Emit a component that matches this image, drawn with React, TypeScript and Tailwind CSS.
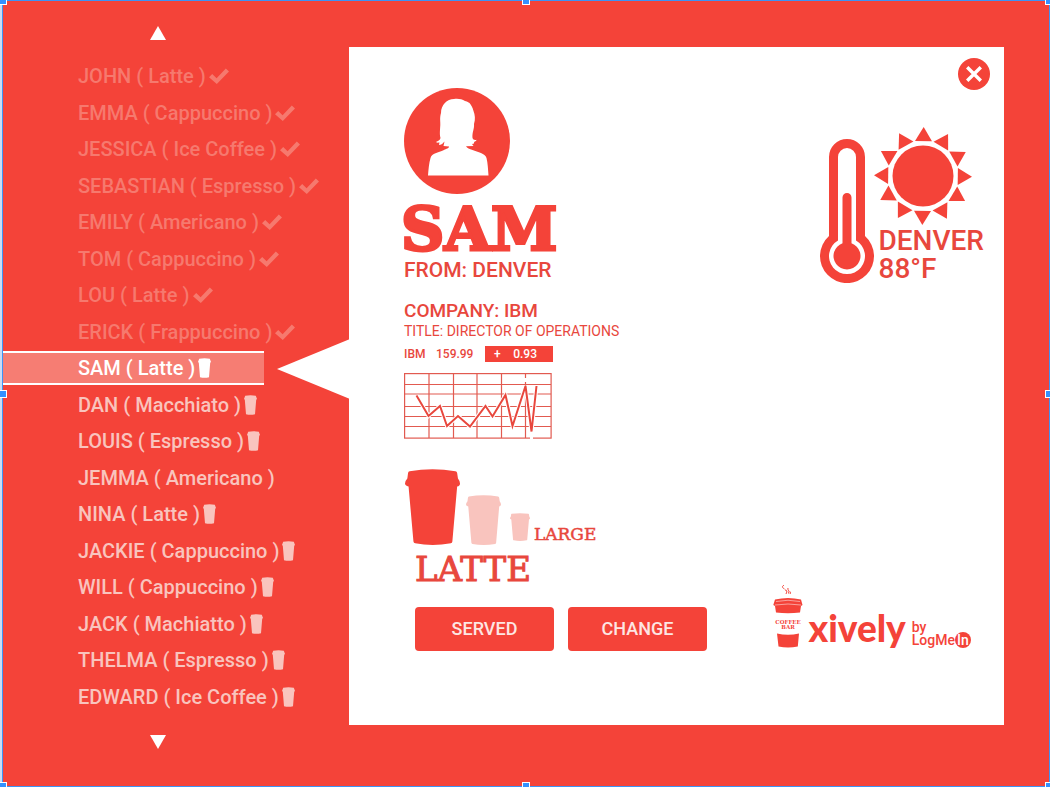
import React from "react";

type Status = "served" | "active" | "waiting" | "none";
type Order = { name: string; drink: string; status: Status };

const orders: Order[] = [
  { name: "JOHN", drink: "Latte", status: "served" },
  { name: "EMMA", drink: "Cappuccino", status: "served" },
  { name: "JESSICA", drink: "Ice Coffee", status: "served" },
  { name: "SEBASTIAN", drink: "Espresso", status: "served" },
  { name: "EMILY", drink: "Americano", status: "served" },
  { name: "TOM", drink: "Cappuccino", status: "served" },
  { name: "LOU", drink: "Latte", status: "served" },
  { name: "ERICK", drink: "Frappuccino", status: "served" },
  { name: "SAM", drink: "Latte", status: "active" },
  { name: "DAN", drink: "Macchiato", status: "waiting" },
  { name: "LOUIS", drink: "Espresso", status: "waiting" },
  { name: "JEMMA", drink: "Americano", status: "none" },
  { name: "NINA", drink: "Latte", status: "waiting" },
  { name: "JACKIE", drink: "Cappuccino", status: "waiting" },
  { name: "WILL", drink: "Cappuccino", status: "waiting" },
  { name: "JACK", drink: "Machiatto", status: "waiting" },
  { name: "THELMA", drink: "Espresso", status: "waiting" },
  { name: "EDWARD", drink: "Ice Coffee", status: "waiting" },
];

const rowStyle: Record<Status, string> = {
  served: "w-full text-[#f6796e]",
  active: "h-[34px] w-[264px] border-y-2 border-white bg-[#f67d73] text-white",
  waiting: "w-full text-[#f9c4be]",
  none: "w-full text-[#f9c4be]",
};

function CheckIcon() {
  return (
    <svg viewBox="0 0 20 16" className="ml-[3px] h-4 w-5 shrink-0" fill="currentColor" aria-hidden="true">
      <path d="M0 9.2 3.2 6l4.4 4.2L16.8.6 20 3.4 7.8 16Z" />
    </svg>
  );
}

function TumblerIcon() {
  return (
    <svg viewBox="0 0 13 20" className="ml-[3px] h-5 w-[13px] shrink-0" fill="currentColor" aria-hidden="true">
      <path d="M1.2.8Q6.5-.4 11.8.8L13 4l-.8.8L11 19.3Q6.5 20.4 2 19.3L.8 4.8 0 4Z" />
    </svg>
  );
}

function CupIcon({ className }: { className: string }) {
  return (
    <svg viewBox="0 0 54 76" className={className} fill="currentColor" preserveAspectRatio="none" aria-hidden="true">
      <path d="M4.5 2.2Q27-1.5 49.5 2.2Q51 2.5 51.2 4L52 9.5Q54 12 54 14.5Q54 17 51.2 17.5L46.5 72.5Q46.3 74 45 74.3Q27 77.5 10 74.3Q8.5 74 8.3 72.5L3.5 17.5Q0 16.5 0 14.5Q0 12 2.3 9.5L3 4Q3.2 2.5 4.5 2.2Z" />
    </svg>
  );
}

function Avatar() {
  return (
    <svg viewBox="0 0 106 106" className="block size-[106px]" role="img" aria-label="Sam">
      <circle cx="53" cy="53" r="53" fill="#f44339" />
      <path
        fill="#fff"
        d="M50 11C43 11 37 17 37 25C35.5 30 36.5 33 36.3 37C36 43 35.5 46 36.5 50C36 52.5 34 53 32 54C33 55 34.5 54.5 35.5 54.5L35 57C37 57 38.5 56 39.5 54.5L40.5 53.5L39.5 58L45 58.5C45.5 60 42 61 40 62C34 65 28 65 26.5 70C25 75 24.5 81 24 87.5H84.5C84 81 83.8 75 82.5 70C81 65 74 64.5 68.5 62C65.5 61 63 60 62 58.2L69.5 58L68 56C70 56 70.5 55 70 54C71.5 53.5 72.5 53 72.5 51.8C70.5 52.5 69 51.5 68.5 50C68 44 70.5 41 70 36C71.5 31 71 27 69.5 23C68.5 19 67 17 65.5 15C64 14.5 64 13.5 61 13C58 11 54 10.5 50 11Z"
      />
    </svg>
  );
}

function StockChart() {
  const points =
    "12.5,22.5 24.5,43 36,33 43,53 54,43 66,53.5 81.5,33 88.5,43.5 101.5,22 108.5,53 121.5,13 127.5,58.5 132.5,13";
  return (
    <svg viewBox="0 0 148 66" className="block h-[66px] w-[148px]" fill="none" role="img" aria-label="IBM stock chart">
      <g stroke="#e25a50" strokeWidth="1.2">
        <rect x="0.6" y="0.6" width="146.5" height="64.5" />
        <path d="M25 .5V65M49.5.5V65M73 .5V65M97.5.5V65M121.5.5V65M.5 11.5H147M.5 21H147M.5 33.5H147M.5 43.5H147M.5 53.5H147" />
      </g>
      <path d="M121.5 5V9M127.5 60V66" stroke="#fff" strokeWidth="3" />
      <polyline points={points} stroke="#fff" strokeWidth="4" />
      <polyline points={points} stroke="#e8473d" strokeWidth="2" />
    </svg>
  );
}

function Thermometer() {
  return (
    <svg viewBox="0 0 54 144" className="mt-3 block h-36 w-[54px]" aria-hidden="true">
      <path fill="#f44339" d="M9 18a18 18 0 0 1 36 0V97a27 27 0 1 1-36 0Z" />
      <path fill="#fff" d="M18 18a9 9 0 0 1 18 0V101.5a18 18 0 1 1-18 0Z" />
      <path fill="#f44339" d="M22.5 58.5a4.5 4.5 0 0 1 9 0V104.3a13.5 13.5 0 1 1-9 0Z" />
    </svg>
  );
}

function Sun() {
  const rays = Array.from({ length: 12 }, (_, i) => i * 30 + 0.8);
  return (
    <svg viewBox="0 0 98 98" className="block size-[98px]" fill="#f44339" aria-hidden="true">
      <circle cx="49" cy="49" r="30.5" />
      {rays.map((angle) => (
        <path key={angle} d="M49 0 57.5 14.2H40.5Z" transform={`rotate(${angle} 49 49)`} />
      ))}
    </svg>
  );
}

function CoffeeBarLogo() {
  return (
    <svg viewBox="0 0 30 63" className="block h-[63px] w-[30px] shrink-0" fill="#f44339" aria-hidden="true">
      <path
        d="M11 0C8 2 10 3 11.5 4M12 5C14 5 14.5 6 13 9M15 3C14 5 17 5 15.5 8.5M17 6.5Q18 8 17 9"
        fill="none"
        stroke="#f44339"
        strokeWidth="1"
      />
      <path d="M2 14.5Q15 11.5 28 14.5L29.5 20 28 21 27 27.5Q15 29 3 27.5L2 21 .3 20Z" />
      <path d="M3 16.5Q15 14 27 16.5M2 20Q15 18 28 20" fill="none" stroke="#fff" strokeWidth=".5" />
      <text x="15" y="38.5" textAnchor="middle" fontFamily="DejaVu Serif" fontWeight="700" fontSize="5.5">
        COFFEE
      </text>
      <text x="15" y="43.5" textAnchor="middle" fontFamily="DejaVu Serif" fontWeight="700" fontSize="5.5">
        BAR
      </text>
      <path d="M4 48.5Q15 51 26 48.5L24.8 61.5Q15 63.5 5.5 61.5Z" />
    </svg>
  );
}

function SelectionFrame() {
  const handle = "absolute size-2 border border-white bg-[#3391ff]";
  return (
    <div className="pointer-events-none absolute inset-0 border-l-2 border-[#c9dcf5]" aria-hidden="true">
      <div className="absolute inset-0 border border-[#3d93f5]" />
      <span className={`${handle} -left-[3px] -top-[3px]`} />
      <span className={`${handle} -top-[3px] left-1/2 -translate-x-1/2`} />
      <span className={`${handle} -right-[3px] -top-[3px]`} />
      <span className={`${handle} -left-[3px] top-1/2 -translate-y-1/2`} />
      <span className={`${handle} -right-[3px] top-1/2 -translate-y-1/2`} />
      <span className={`${handle} -bottom-[3px] -left-[3px]`} />
      <span className={`${handle} -bottom-[3px] left-1/2 -translate-x-1/2`} />
      <span className={`${handle} -bottom-[3px] -right-[3px]`} />
    </div>
  );
}

export default function App() {
  return (
    <div className="relative flex min-h-screen overflow-hidden bg-[#f44339] font-['Roboto',sans-serif] text-[#e8473d]">
      <aside className="flex w-[349px] shrink-0 flex-col">
        <div className="flex h-[58px] pl-[150px] pt-[26px]">
          <button type="button" aria-label="Scroll up" className="h-[14px] w-4">
            <svg viewBox="0 0 16 14" className="block" fill="#fff">
              <path d="M8 0 16 14H0Z" />
            </svg>
          </button>
        </div>
        <ul className="flex flex-1 flex-col">
          {orders.map((order) => (
            <li key={order.name} className="flex flex-1 items-center">
              <button
                type="button"
                className={`flex items-center whitespace-nowrap pl-[78px] text-xl font-medium leading-6 ${rowStyle[order.status]}`}
              >
                {order.name} ( {order.drink} )
                {order.status === "served" && <CheckIcon />}
                {(order.status === "active" || order.status === "waiting") && <TumblerIcon />}
              </button>
            </li>
          ))}
        </ul>
        <div className="flex h-[72px] pl-[150px] pt-[20px]">
          <button type="button" aria-label="Scroll down" className="h-[14px] w-4">
            <svg viewBox="0 0 16 14" className="block" fill="#fff">
              <path d="M8 14 0 0H16Z" />
            </svg>
          </button>
        </div>
      </aside>

      <main className="relative mb-[62px] mr-[46px] mt-[47px] flex flex-1 flex-col bg-white pb-[73px] pl-[55px] pr-5 pt-[41px]">
        <svg viewBox="0 0 73 60" className="absolute -left-[72px] top-[292px] h-[60px] w-[73px]" fill="#fff" aria-hidden="true">
          <path d="M0 30 73 0V60Z" />
        </svg>
        <button
          type="button"
          aria-label="Close"
          className="absolute right-[14px] top-[11px] flex size-8 items-center justify-center rounded-full bg-[#f44339]"
        >
          <svg viewBox="0 0 16 16" className="size-4" stroke="#fff" strokeWidth="3.4" aria-hidden="true">
            <path d="M1.2 1.2 14.8 14.8M14.8 1.2 1.2 14.8" />
          </svg>
        </button>

        <div className="flex justify-between">
          <section>
            <Avatar />
            <h1 className="-ml-[3px] mt-1 font-['DejaVu_Serif',serif] text-[60px] font-bold leading-[62px] text-[#f44339] [-webkit-text-stroke:3px_#f44339]">
              SAM
            </h1>
            <p className="text-[21px] font-medium leading-5">FROM: DENVER</p>
            <p className="mt-[22px] text-[19px] font-medium leading-[18px]">COMPANY: IBM</p>
            <p className="text-sm leading-[22px]">TITLE: DIRECTOR OF OPERATIONS</p>
            <div className="mt-1 flex items-center text-xs font-medium leading-4">
              <span className="w-8">IBM</span>
              <span className="w-[49px]">159.99</span>
              <span className="flex w-[68px] justify-between bg-[#f44339] pl-[9px] pr-4 text-white">
                <span>+</span>
                <span>0.93</span>
              </span>
            </div>
            <div className="mt-[11px]">
              <StockChart />
            </div>
          </section>

          <section className="mt-[39px] flex items-start">
            <Thermometer />
            <div>
              <Sun />
              <p className="ml-[5px] mt-[2px] text-[28px] font-medium leading-7">
                DENVER
                <br />
                88°F
              </p>
            </div>
          </section>
        </div>

        <div className="mt-[30px] flex items-end">
          <CupIcon className="ml-[1px] h-[76px] w-[55px] text-[#f44339]" />
          <CupIcon className="ml-[6px] h-[50px] w-[35px] text-[#f9c4be]" />
          <CupIcon className="mb-1 ml-[9px] h-7 w-5 text-[#f9c4be]" />
          <span className="ml-1 font-['DejaVu_Serif',serif] text-[17px] leading-[22px] [-webkit-text-stroke:0.5px_#e8473d]">LARGE</span>
        </div>

        <div className="flex items-end justify-between pr-[13px]">
          <section className="pl-[11px]">
            <h2 className="mt-[6px] font-['DejaVu_Serif',serif] text-[34px] leading-9 [-webkit-text-stroke:1px_#e8473d]">LATTE</h2>
            <div className="mt-5 flex gap-[14px]">
              <button type="button" className="h-11 w-[139px] rounded bg-[#f44339] text-lg font-medium text-[#fde6e3]">
                SERVED
              </button>
              <button type="button" className="h-11 w-[139px] rounded bg-[#f44339] text-lg font-medium text-[#fde6e3]">
                CHANGE
              </button>
            </div>
          </section>
          <section className="mb-[3px] flex items-end text-[#f44339]">
            <CoffeeBarLogo />
            <span className="ml-[5px] font-['Lato',sans-serif] text-[37px] font-black leading-[40px]">xively</span>
            <div className="ml-[6px] text-sm font-medium leading-none">
              <p className="leading-[9px]">by</p>
              <p className="flex items-center leading-4">
                LogMe
                <span className="flex size-4 items-center justify-center rounded-full bg-[#f44339] text-white">In</span>
              </p>
            </div>
          </section>
        </div>
      </main>

      <SelectionFrame />
    </div>
  );
}
